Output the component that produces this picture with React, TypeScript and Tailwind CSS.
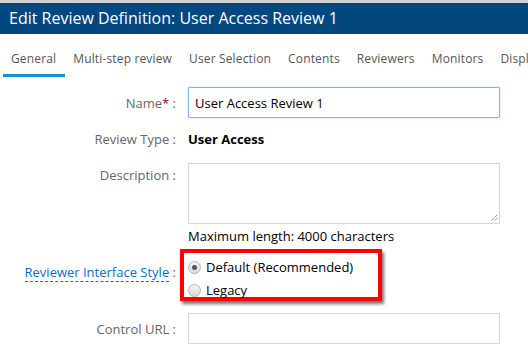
import React from "react";

const font = { fontFamily: '"Open Sans", "Noto Sans", sans-serif' };

export default function App() {
  const tabs = ["General", "Multi-step review", "User Selection", "Contents", "Reviewers", "Monitors", "Display"];
  return (
    <div className="w-[528px] h-[350px] overflow-hidden bg-white" style={font}>
      <div className="h-[3px] bg-[#cfd3d8]" />
      <div className="h-[31px] bg-[#03477f] text-white text-[16px] leading-[31px] pl-[9px] whitespace-nowrap">
        Edit Review Definition: User Access Review 1
      </div>
      <div className="flex h-[43px] pl-[3px] whitespace-nowrap text-[12px] tracking-[0.15px] text-[#555]">
        {tabs.map((t, i) => (
          <div
            key={t}
            className={
              "shrink-0 pl-[8px] pr-[9px] pt-[16px] " +
              (i === 0 ? "border-b-[3px] border-[#1592d2]" : "")
            }
          >
            {t}
          </div>
        ))}
      </div>
      <div className="grid grid-cols-[176px_312px] gap-x-[12px] text-[13px] mt-[10px]">
        <div className="text-right text-[#666] pt-[7px]">
          Name<span className="text-[#a0001e]">*</span> :
        </div>
        <input
          readOnly
          value="User Access Review 1"
          className="h-[31px] border border-[#8db2ea] rounded-[1px] px-[6px] text-[13px] text-black outline-none shadow-[0_0_2px_rgba(100,150,230,0.5)]"
          style={font}
        />
        <div className="text-right text-[#666] mt-[12px]">Review Type :</div>
        <div className="mt-[12px] font-bold text-black text-[13px]">User Access</div>
        <div className="text-right text-[#666] mt-[16px]">Description :</div>
        <div className="mt-[13px]">
          <div className="relative h-[61px] border border-[#d6d6d6]">
            <svg className="absolute right-[1px] bottom-[1px]" width="9" height="9" viewBox="0 0 9 9">
              <path d="M8 2 L2 8 M8 5 L5 8" stroke="#666" strokeWidth="1" strokeDasharray="1 1" />
            </svg>
          </div>
          <div className="text-black mt-[3px]">Maximum length: 4000 characters</div>
        </div>
        <div className="text-right text-[#666] mt-[17px] leading-[18px]">
          <span className="text-[#0a6ec3] border-b border-dashed border-[#0a6ec3]">Reviewer Interface Style</span> :
        </div>
        <div className="mt-[3px] -ml-[8px] w-[202px] h-[52px] border-[4px] border-[#f00] shadow-[2px_3px_3px_rgba(0,0,0,0.55)] px-[4px] pt-[3px]">
          {["Default (Recommended)", "Legacy"].map((l, i) => (
            <div key={l} className="flex items-center h-[23px] text-black">
              <span className="w-[13px] h-[13px] rounded-full border border-[#b5b5b5] bg-gradient-to-b from-[#f2f2f2] to-[#d9d9d9] flex items-center justify-center mr-[5px]">
                {i === 0 && <span className="w-[5px] h-[5px] rounded-full bg-[#555]" />}
              </span>
              {l}
            </div>
          ))}
        </div>
        <div className="text-right text-[#666] mt-[19px]">Control URL :</div>
        <div className="mt-[12px] h-[31px] border border-[#d6d6d6]" />
      </div>
    </div>
  );
}
